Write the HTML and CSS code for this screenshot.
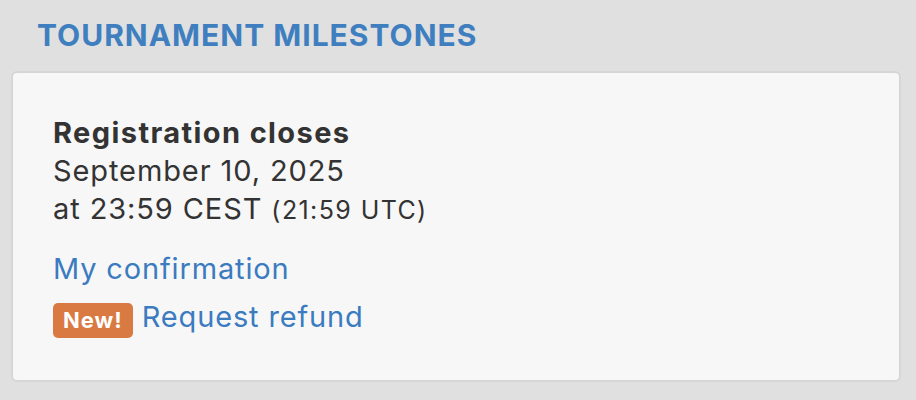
FILE: index.html
```html
<!DOCTYPE html>
<html lang="en">
<head>
<meta charset="utf-8">
<title>Tournament milestones</title>
<link rel="stylesheet" href="styles.css">
</head>
<body>
<section class="panel">
  <h2 class="panel-title">TOURNAMENT MILESTONES</h2>
  <div class="card">
    <div class="milestone">
      <div class="milestone-name">Registration closes</div>
      <div class="milestone-date">September 10, 2025</div>
      <div class="milestone-time">at 23:59 CEST <span class="utc">(21:59 UTC)</span></div>
    </div>
    <ul class="links">
      <li><a class="link" href="#">My confirmation</a></li>
      <li><span class="badge">New!</span> <a class="link" href="#">Request refund</a></li>
    </ul>
  </div>
</section>
</body>
</html>
```

FILE: styles.css
```css
html, body {
  margin: 0;
  padding: 0;
  background: #e0e0e0;
}
body {
  font-family: Inter, "Noto Sans", "Liberation Sans", sans-serif;
  color: #333333;
}
.panel {
  padding: 15px 15px 19px 11px;
}
.panel-title {
  margin: 0 0 16px 26px;
  font-size: 30px;
  line-height: 40px;
  font-weight: 700;
  color: #3f7fc0;
  letter-spacing: 1px;
}
.card {
  background: #f7f7f7;
  border: 2px solid #d6d6d6;
  border-radius: 6px;
  padding: 41px 40px 39px 40px;
}
.milestone {
  font-size: 29px;
  line-height: 38px;
  letter-spacing: 0.9px;
}
.milestone-name {
  font-weight: 700;
  letter-spacing: 1.4px;
}
.utc {
  font-size: 25px;
  letter-spacing: 1.4px;
}
.links {
  list-style: none;
  margin: 16px 0 0 0;
  padding: 0;
  font-size: 29px;
  line-height: 48px;
  letter-spacing: 0.85px;
}
.link {
  color: #3b7bbf;
  text-decoration: none;
}
.badge {
  display: inline-block;
  vertical-align: -1px;
  background: #d97a43;
  color: #ffffff;
  font-size: 22px;
  font-weight: 700;
  line-height: 35px;
  padding: 0 10px;
  border-radius: 5px;
  letter-spacing: 1px;
}
```
